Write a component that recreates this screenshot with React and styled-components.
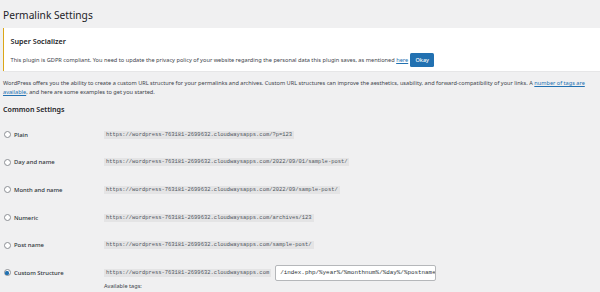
import React from "react";
import styled, { createGlobalStyle } from "styled-components";

const Global = createGlobalStyle`
  html, body { margin: 0; padding: 0; background: #f0f0f1; }
  body { font-family: "Noto Sans", "Open Sans", sans-serif; color: #3c434a; overflow: hidden; }
  * { box-sizing: border-box; }
`;

const Page = styled.div`
  width: 600px;
  height: 292px;
  padding: 8px 0 0 3px;
  overflow: hidden;
`;

const Title = styled.h1`
  margin: 0;
  font-size: 10.2px;
  line-height: 14px;
  font-weight: 400;
  color: #1d2327;
`;

const Notice = styled.div`
  margin-top: 6px;
  height: 43px;
  background: #fff;
  border-left: 1.5px solid #dba617;
  box-shadow: 0 0.5px 0.5px rgba(0, 0, 0, 0.04);
  padding: 8px 6px 0 6.5px;
`;

const NoticeTitle = styled.div`
  font-size: 7.2px;
  line-height: 10px;
  font-weight: 600;
  color: #1d2327;
`;

const NoticeRow = styled.div`
  margin-top: 7px;
  display: flex;
  align-items: center;
  gap: 2px;
  font-size: 5.65px;
  line-height: 14px;
`;

const Link = styled.a`
  color: #2271b1;
  text-decoration: underline;
  cursor: pointer;
`;

const OkButton = styled.button`
  height: 14px;
  width: 24px;
  padding: 0;
  border: none;
  border-radius: 1.5px;
  background: #2271b1;
  color: #fff;
  font-family: inherit;
  font-size: 5.5px;
  font-weight: 500;
`;

const Intro = styled.p`
  margin: 8px 0 0;
  font-size: 5.6px;
  line-height: 9px;
  padding-right: 4px;
`;

const SectionTitle = styled.h2`
  margin: 7px 0 0;
  font-size: 7.1px;
  line-height: 10px;
  font-weight: 600;
  color: #1d2327;
`;

const Rows = styled.div`
  margin-top: 7px;
`;

const Row = styled.div`
  display: grid;
  grid-template-columns: 101px 1fr;
  align-items: ${(p) => (p.$top ? "start" : "center")};
  height: 27.6px;
  padding-top: ${(p) => (p.$top ? "6px" : "0")};
`;

const Label = styled.label`
  display: flex;
  align-items: center;
  gap: 3.5px;
  font-size: 5.9px;
  font-weight: 500;
  color: #2c3338;
  line-height: 16px;
  padding-left: 0.5px;
`;

const Radio = styled.span`
  width: 7px;
  height: 7px;
  border-radius: 50%;
  border: 0.6px solid #8c8f94;
  background: #fff;
  display: inline-flex;
  align-items: center;
  justify-content: center;
  &::after {
    content: "";
    width: 3.2px;
    height: 3.2px;
    border-radius: 50%;
    background: ${(p) => (p.$checked ? "#2271b1" : "transparent")};
  }
`;

const Cell = styled.div`
  display: flex;
  flex-direction: column;
  align-items: flex-start;
`;

const Line = styled.div`
  display: flex;
  align-items: center;
  gap: 4px;
`;

const Code = styled.code`
  font-family: "Liberation Mono", "DejaVu Sans Mono", monospace;
  font-size: 5.45px;
  line-height: 8px;
  padding: 0 2px;
  background: #e4e4e5;
  color: #50575e;
`;

const Input = styled.input`
  width: 161px;
  height: 16px;
  margin: 0;
  background: #fff;
  border: 0.6px solid #b5b7ba;
  border-radius: 2px;
  font-family: "Liberation Mono", "DejaVu Sans Mono", monospace;
  font-size: 5.9px;
  padding: 0 0 0 4px;
  color: #2c3338;
  outline: none;
`;

const Hint = styled.div`
  margin-top: 1px;
  font-size: 5.6px;
  line-height: 9px;
`;

const base = "https://wordpress-763181-2699632.cloudwaysapps.com";

const options = [
  { label: "Plain", url: base + "/?p=123" },
  { label: "Day and name", url: base + "/2022/09/01/sample-post/" },
  { label: "Month and name", url: base + "/2022/09/sample-post/" },
  { label: "Numeric", url: base + "/archives/123" },
  { label: "Post name", url: base + "/sample-post/" },
];

export default function App() {
  return (
    <>
      <Global />
      <Page>
        <Title>Permalink Settings</Title>
        <Notice>
          <NoticeTitle>Super Socializer</NoticeTitle>
          <NoticeRow>
            <span>
              This plugin is GDPR compliant. You need to update the privacy policy of your website regarding the
              personal data this plugin saves, as mentioned <Link>here</Link>
            </span>
            <OkButton>Okay</OkButton>
          </NoticeRow>
        </Notice>
        <Intro>
          WordPress offers you the ability to create a custom URL structure for your permalinks and archives. Custom URL
          structures can improve the aesthetics, usability, and forward-compatibility of your links. A{" "}
          <Link>number of tags are available</Link>, and here are some examples to get you started.
        </Intro>
        <SectionTitle>Common Settings</SectionTitle>
        <Rows>
          {options.map((o) => (
            <Row key={o.label}>
              <Label>
                <Radio />
                {o.label}
              </Label>
              <Cell>
                <Code>{o.url}</Code>
              </Cell>
            </Row>
          ))}
          <Row $top>
            <Label>
              <Radio $checked />
              Custom Structure
            </Label>
            <Cell>
              <Line>
                <Code>{base}</Code>
                <Input readOnly value="/index.php/%year%/%monthnum%/%day%/%postname%/" />
              </Line>
              <Hint>Available tags:</Hint>
            </Cell>
          </Row>
        </Rows>
      </Page>
    </>
  );
}
